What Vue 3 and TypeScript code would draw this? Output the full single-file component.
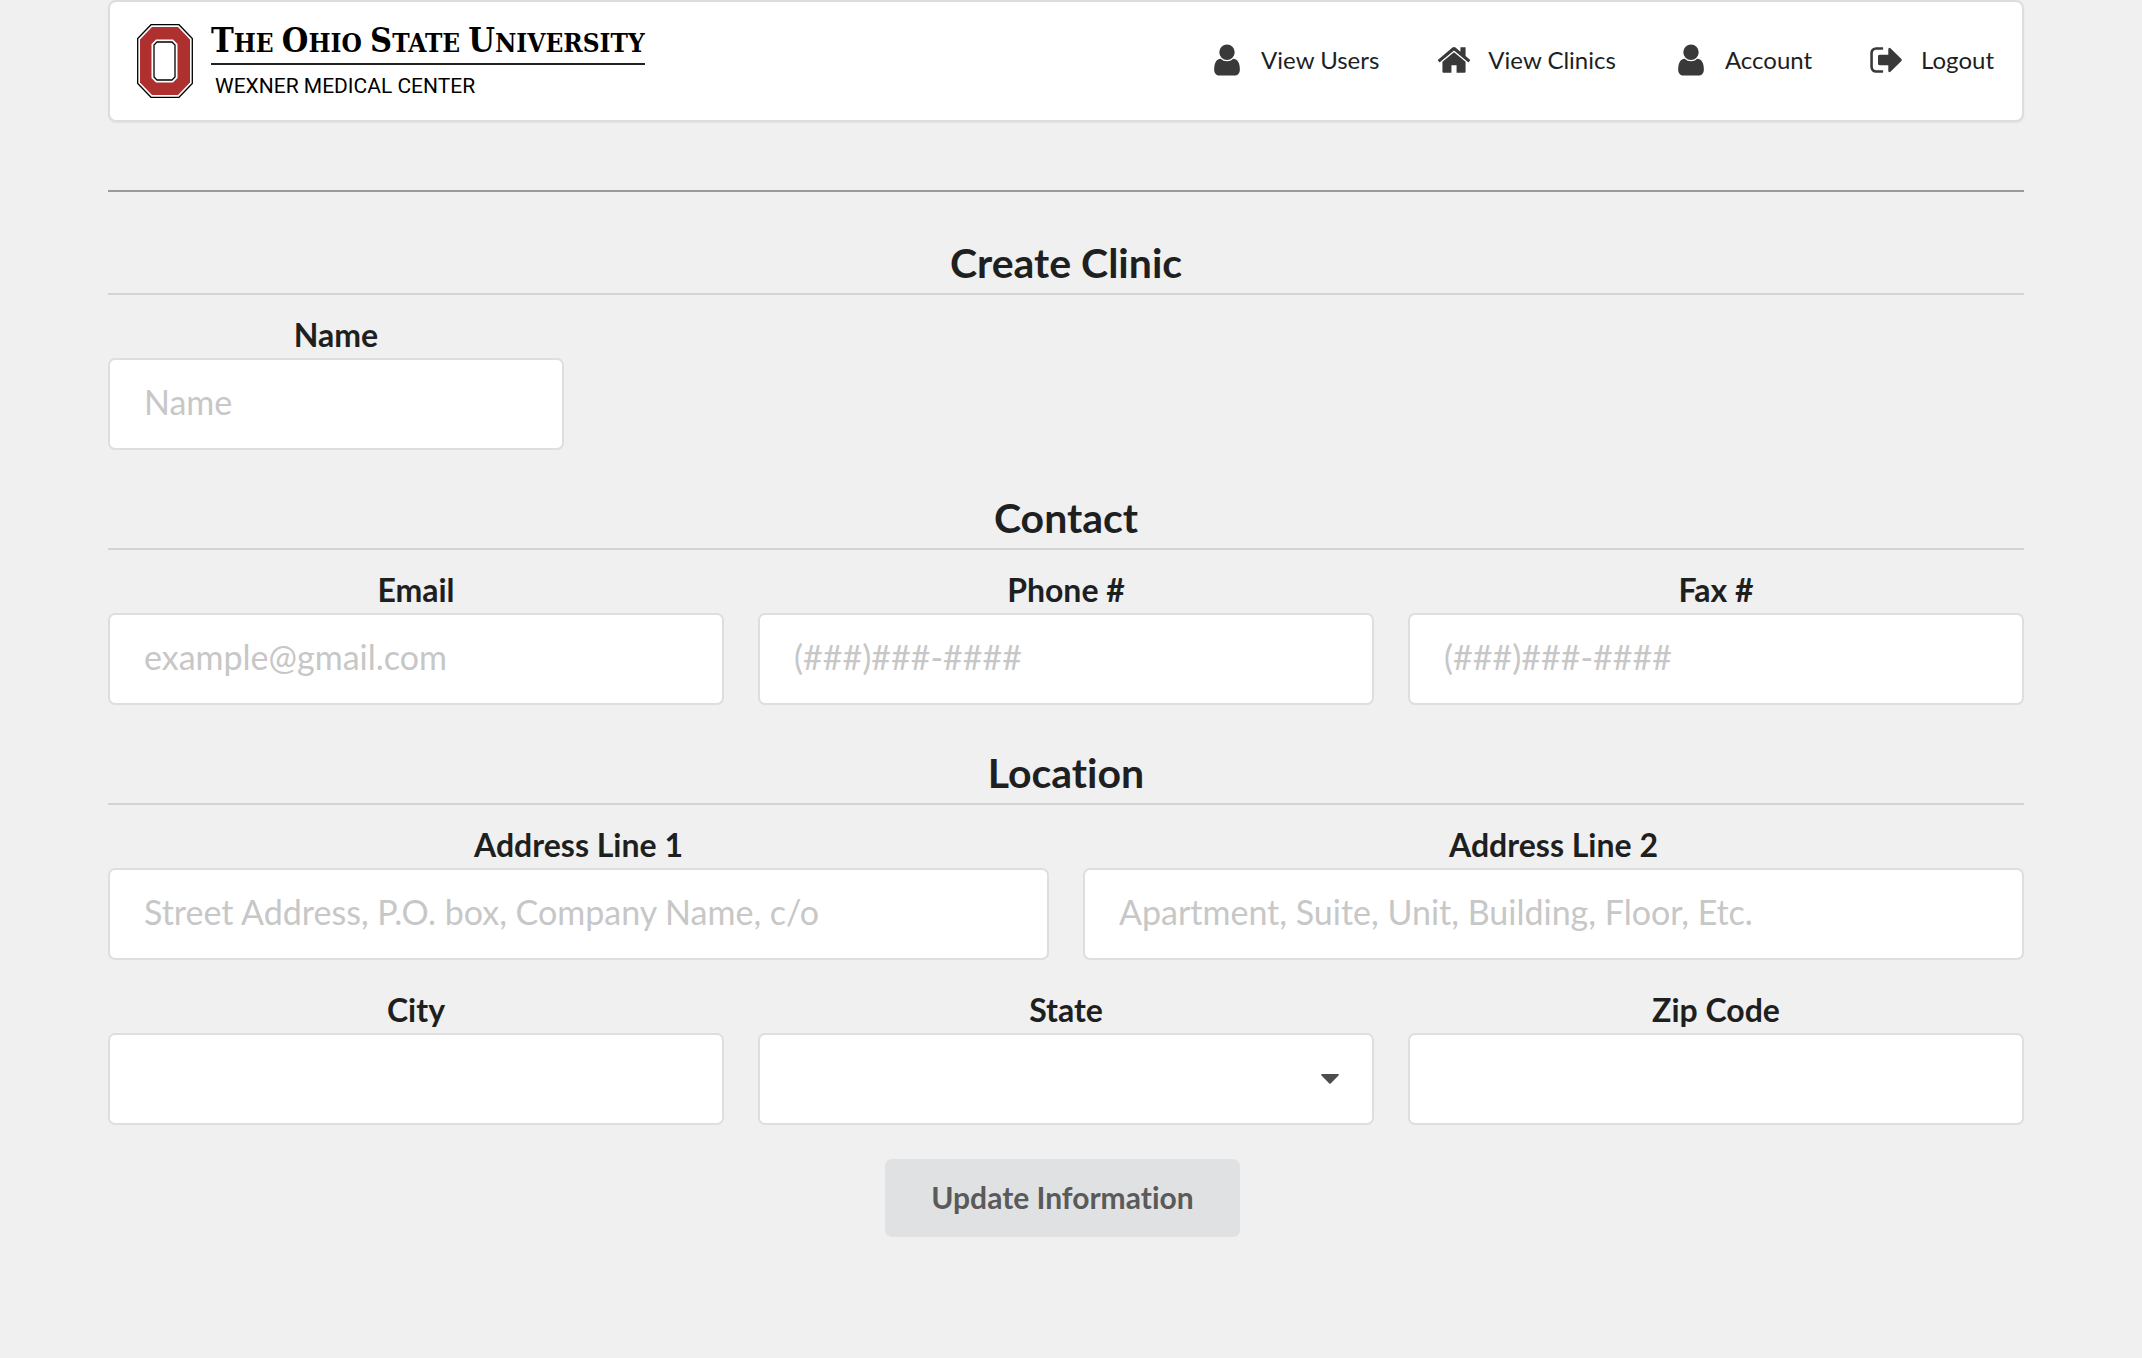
<script setup lang="ts">
import { reactive } from 'vue'

type IconName = 'user' | 'home' | 'signOut'

interface NavItem {
  label: string
  icon: IconName
}

interface Field {
  id: string
  label: string
  type: 'text' | 'email' | 'tel' | 'select'
  placeholder?: string
}

interface Section {
  title: string
  rows: Field[][]
}

const icons: Record<IconName, string> = {
  user: 'M1536 1399q0 109-62.5 187t-150.5 78h-854q-88 0-150.5-78t-62.5-187q0-85 8.5-160.5t31.5-152 58.5-131 94-89 134.5-34.5q131 128 313 128t313-128q76 0 134.5 34.5t94 89 58.5 131 31.5 152 8.5 160.5zm-256-887q0 159-112.5 271.5t-271.5 112.5-271.5-112.5-112.5-271.5 112.5-271.5 271.5-112.5 271.5 112.5 112.5 271.5z',
  home: 'M1472 992v480q0 26-19 45t-45 19h-384v-384h-256v384h-384q-26 0-45-19t-19-45v-480q0-1 .5-3t.5-3l575-474 575 474q1 2 1 6zm223-69l-62 74q-8 9-21 11h-3q-13 0-21-7l-692-577-692 577q-12 8-24 7-13-2-21-11l-62-74q-8-10-7-23.5t11-21.5l719-599q32-26 76-26t76 26l244 204v-195q0-14 9-23t23-9h192q14 0 23 9t9 23v408l219 182q10 8 11 21.5t-7 23.5z',
  signOut: 'M704 1440q0 4 1 20t.5 26.5-3 23.5-10 19.5-20.5 6.5h-320q-119 0-203.5-84.5t-84.5-203.5v-704q0-119 84.5-203.5t203.5-84.5h320q13 0 22.5 9.5t9.5 22.5q0 4 1 20t.5 26.5-3 23.5-10 19.5-20.5 6.5h-320q-66 0-113 47t-47 113v704q0 66 47 113t113 47h312l11.5 1 11.5 3 8 5.5 7 9 2 13.5zm928-544q0 26-19 45l-544 544q-19 19-45 19t-45-19-19-45v-288h-448q-26 0-45-19t-19-45v-384q0-26 19-45t45-19h448v-288q0-26 19-45t45-19 45 19l544 544q19 19 19 45z',
}

const nav: NavItem[] = [
  { label: 'View Users', icon: 'user' },
  { label: 'View Clinics', icon: 'home' },
  { label: 'Account', icon: 'user' },
  { label: 'Logout', icon: 'signOut' },
]

const sections: Section[] = [
  {
    title: 'Create Clinic',
    rows: [[{ id: 'name', label: 'Name', type: 'text', placeholder: 'Name' }]],
  },
  {
    title: 'Contact',
    rows: [
      [
        { id: 'email', label: 'Email', type: 'email', placeholder: 'example@gmail.com' },
        { id: 'phone', label: 'Phone #', type: 'tel', placeholder: '(###)###-####' },
        { id: 'fax', label: 'Fax #', type: 'tel', placeholder: '(###)###-####' },
      ],
    ],
  },
  {
    title: 'Location',
    rows: [
      [
        { id: 'address1', label: 'Address Line 1', type: 'text', placeholder: 'Street Address, P.O. box, Company Name, c/o' },
        { id: 'address2', label: 'Address Line 2', type: 'text', placeholder: 'Apartment, Suite, Unit, Building, Floor, Etc.' },
      ],
      [
        { id: 'city', label: 'City', type: 'text' },
        { id: 'state', label: 'State', type: 'select' },
        { id: 'zip', label: 'Zip Code', type: 'text' },
      ],
    ],
  },
]

const form = reactive<Record<string, string>>({
  name: '', email: '', phone: '', fax: '', address1: '', address2: '', city: '', state: '', zip: '',
})
</script>

<template>
  <div class="page">
    <header class="topbar">
      <a class="brand" href="#">
        <svg class="block-o" viewBox="0 0 56 74" aria-hidden="true">
          <path d="M14 .7H42L55.300 14.500V59.500L42 73.300H14L.7 59.500V14.500Z" fill="#fff" stroke="#000" stroke-width="1.300" />
          <path d="M15 3H41L53 15.500V58.500L41 71H15L3 58.500V15.500Z" fill="#ae302f" />
          <path d="M19 15.500H36L40.500 20V54L36 58.500H19L14.500 54V20Z" fill="#fff" />
          <path d="M20 18H35L38 21V53L35 56H20L17 53V21Z" fill="#fff" stroke="#000" stroke-width="1.300" />
        </svg>
        <span class="brand-text">
          <span class="university">
            <span class="word">The</span> <span class="word">Ohio</span> <span class="word">State</span> <span class="word">University</span>
          </span>
          <span class="center">WEXNER MEDICAL CENTER</span>
        </span>
      </a>
      <nav class="nav">
        <a v-for="item in nav" :key="item.label" class="nav-item" href="#">
          <svg class="nav-icon" viewBox="0 0 1792 1792" aria-hidden="true"><path :d="icons[item.icon]" /></svg>
          <span>{{ item.label }}</span>
        </a>
      </nav>
    </header>

    <hr class="divider" />

    <form class="form" @submit.prevent>
      <section v-for="section in sections" :key="section.title" class="section">
        <h2 class="title">{{ section.title }}</h2>
        <div class="rows">
          <div v-for="row in section.rows" :key="row[0].id" class="row" :class="{ single: row.length === 1 }">
            <div v-for="field in row" :key="field.id" class="field">
              <label class="label" :for="field.id">{{ field.label }}</label>
              <div v-if="field.type === 'select'" class="select-wrap">
                <select :id="field.id" v-model="form[field.id]" class="control">
                  <option value=""></option>
                  <option value="OH">Ohio</option>
                </select>
                <svg class="caret" viewBox="0 0 18 10" aria-hidden="true"><path d="M1 0H17Q18.500 .5 17.500 1.500L9.700 9.500Q9 10.200 8.300 9.500L.5 1.500Q-.5 .5 1 0Z" /></svg>
              </div>
              <input v-else :id="field.id" v-model="form[field.id]" class="control" :type="field.type" :placeholder="field.placeholder" />
            </div>
          </div>
        </div>
      </section>
      <button class="submit" type="submit">Update Information</button>
    </form>
  </div>
</template>

<style>
body {
  background: #f0f0f0;
}
</style>

<style scoped>
.page {
  padding: 0 118px 0 108px;
  font-family: Lato, "Liberation Sans", sans-serif;
  font-variant-ligatures: none;
  color: #1e1f1f;
}

.topbar {
  display: flex;
  align-items: center;
  justify-content: space-between;
  box-sizing: border-box;
  height: 122px;
  padding: 0 28px 0 27px;
  background: #fff;
  border: 2px solid #dddddd;
  border-radius: 8px;
  box-shadow: 0 1px 2px rgba(0, 0, 0, 0.06);
}

.brand {
  display: flex;
  align-items: center;
  gap: 18px;
  color: #000;
  text-decoration: none;
}

.block-o {
  width: 56px;
  height: 74px;
}

.brand-text {
  display: flex;
  flex-direction: column;
}

.university {
  padding-bottom: 3px;
  border-bottom: 2px solid #222;
  font-family: "DejaVu Serif Condensed", "DejaVu Serif", serif;
  font-size: 26px;
  font-weight: 700;
  line-height: 34px;
  white-space: nowrap;
}

.word {
  display: inline-block;
  text-transform: uppercase;
}

.word::first-letter {
  font-size: 34px;
}

.center {
  padding: 8px 0 0 4px;
  font-family: Roboto, sans-serif;
  font-size: 21px;
  line-height: 26px;
}

.nav {
  display: flex;
  gap: 57px;
  padding-bottom: 2px;
}

.nav-item {
  display: flex;
  align-items: center;
  gap: 16px;
  color: #1e1f1f;
  font-size: 24px;
  line-height: 36px;
  text-decoration: none;
}

.nav-icon {
  width: 36px;
  height: 36px;
  fill: #393939;
}

.divider {
  margin: 68px 0 47px;
  border: 0;
  border-top: 2px solid #9a9a9a;
}

.form {
  display: flex;
  flex-direction: column;
  align-items: center;
}

.section {
  width: 100%;
  margin-bottom: 44px;
}

.section:last-of-type {
  margin-bottom: 34px;
}

.title {
  margin: 0 0 19px;
  padding-bottom: 6px;
  border-bottom: 2px solid #d3d3d3;
  font-size: 41px;
  line-height: 48px;
  font-weight: 700;
  text-align: center;
}

.rows {
  display: flex;
  flex-direction: column;
  gap: 29px;
}

.row {
  display: flex;
  gap: 34px;
}

.field {
  flex: 1 1 0;
  min-width: 0;
}

.single .field {
  flex: 0 1 456px;
}

.label {
  display: block;
  margin-bottom: 2px;
  font-size: 32px;
  line-height: 42px;
  font-weight: 700;
  text-align: center;
}

.control {
  display: block;
  box-sizing: border-box;
  width: 100%;
  height: 92px;
  margin: 0;
  padding: 0 34px 6px;
  appearance: none;
  background: #fff;
  border: 2px solid #dedede;
  border-radius: 7px;
  color: #1e1f1f;
  font-family: inherit;
  font-size: 34px;
  font-variant-ligatures: none;
}

.control::placeholder {
  color: #c7c7c7;
  opacity: 1;
}

.select-wrap {
  position: relative;
}

.caret {
  position: absolute;
  top: 41px;
  right: 35px;
  width: 18px;
  height: 10px;
  fill: #4d4d4d;
  pointer-events: none;
}

.submit {
  margin-right: 7px;
  padding: 0 46px 2px;
  background: #e0e1e2;
  border: 0;
  border-radius: 7px;
  color: #5a5a5a;
  font-family: inherit;
  font-size: 30px;
  font-variant-ligatures: none;
  line-height: 76px;
  font-weight: 700;
}
</style>
